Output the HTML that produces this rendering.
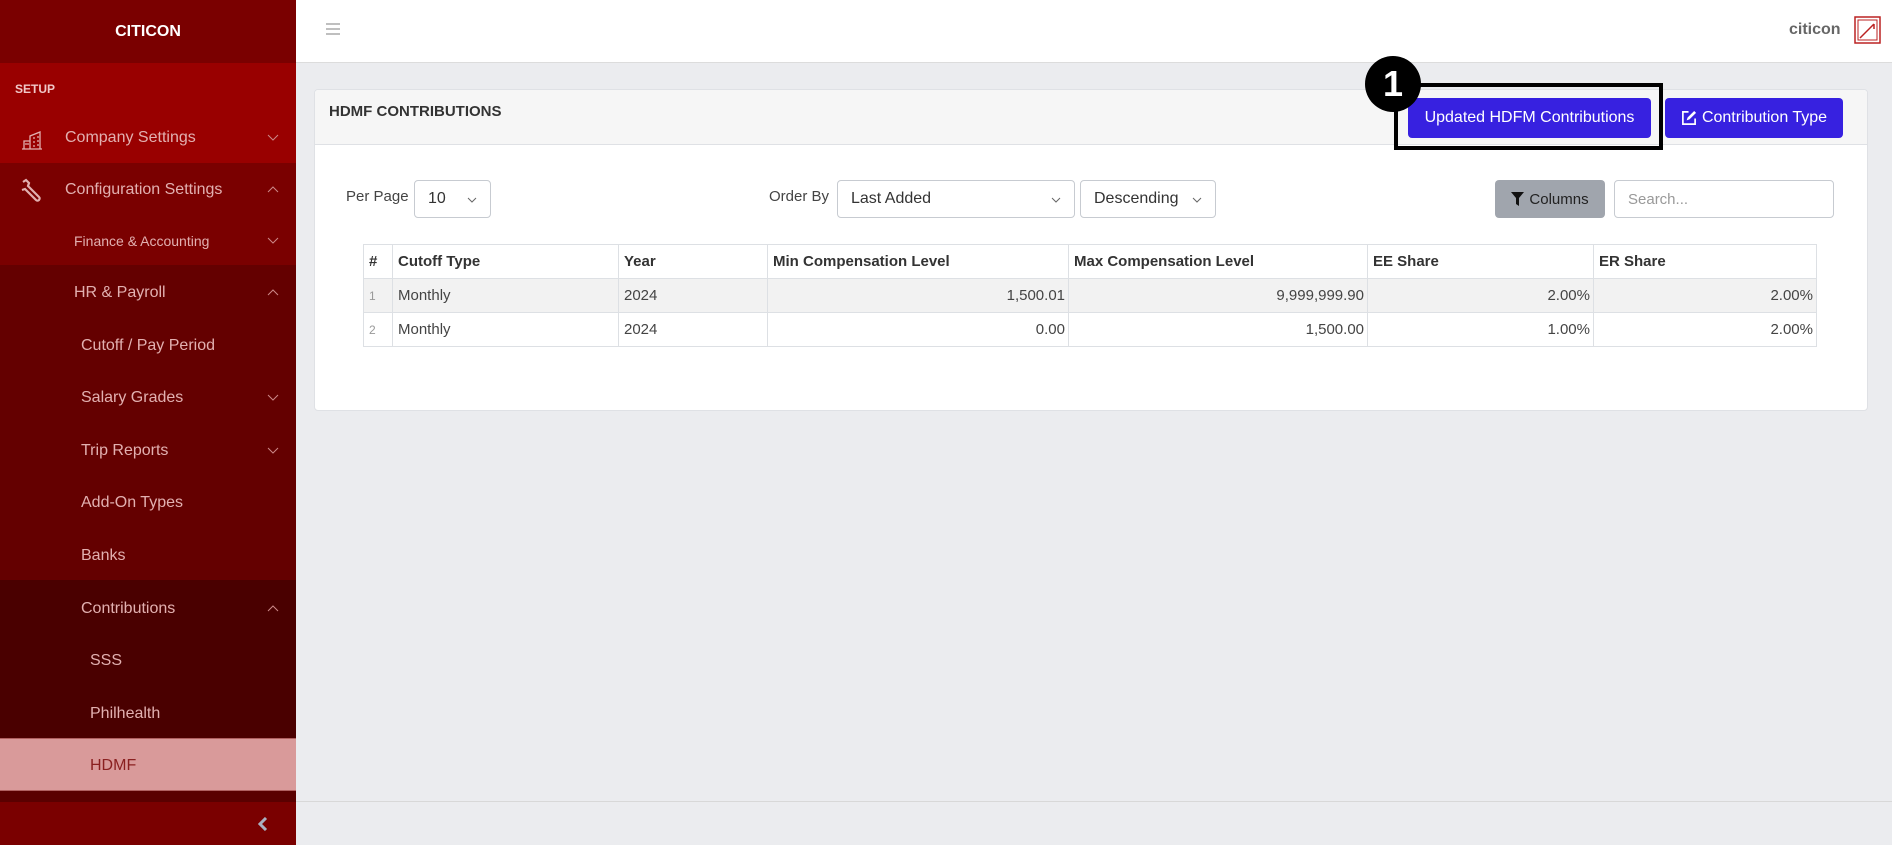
<!DOCTYPE html>
<html><head><meta charset="utf-8"><style>
*{box-sizing:border-box;margin:0;padding:0}
body{width:1892px;height:845px;position:relative;overflow:hidden;background:#ebecef;font-family:"Liberation Sans",sans-serif;color:#333}
.a{position:absolute}
.sb{left:0;top:0;width:296px;height:845px;background:#7a0000}
.row{position:absolute;left:0;width:296px;color:#e2b0b0;font-size:16px;display:flex;align-items:center}
.chev{position:absolute;right:17px;top:50%;margin-top:-4px}
.hd{left:296px;top:0;width:1596px;height:63px;background:#fff;border-bottom:1px solid #dcdcdc}
.card{left:314px;top:89px;width:1554px;height:322px;background:#fff;border:1px solid #dfe1e5;border-radius:4px}
.btn{position:absolute;background:#3721e0;color:#fff;font-size:16px;border-radius:4px;display:flex;align-items:center;justify-content:center}
.sel{position:absolute;border:1px solid #c7cbd1;border-radius:4px;background:#fff;font-size:16px;color:#333;display:flex;align-items:center;padding-left:13px;height:38px;top:180px}
.sel svg{position:absolute;right:13px;top:16px}
table{position:absolute;left:363px;top:244px;width:1454px;border-collapse:collapse;font-size:15px;color:#444}
td,th{border:1px solid #dde0e4;padding:0 5px;height:34px;text-align:left}
th{font-weight:bold;color:#333}
td.r{text-align:right;padding-right:3px}
tr.g td{background:#f2f2f2}
td.n{color:#999;font-size:12px}
</style></head><body>
<div class="a sb"></div>
<div class="a" style="left:0;top:0;width:296px;height:63px;background:#7a0000;color:#fff;font-weight:bold;font-size:16px;text-align:center;line-height:63px">CITICON</div>
<div class="a" style="left:0;top:63px;width:296px;height:100px;background:#990000"></div>
<div class="a" style="left:15px;top:82px;color:#f0c8c8;font-size:12px;font-weight:bold">SETUP</div>
<div class="a" style="left:0;top:163px;width:296px;height:102px;background:#7a0000"></div>
<div class="a" style="left:0;top:265px;width:296px;height:315px;background:#640000"></div>
<div class="a" style="left:0;top:580px;width:296px;height:158px;background:#4a0000"></div>
<div class="a" style="left:0;top:738px;width:296px;height:53px;background:#d99a9a;border-top:1px solid #b06060;border-bottom:1px solid #b06060"></div>
<div class="a" style="left:0;top:791px;width:296px;height:11px;background:#5a0000"></div>
<div class="a" style="left:0;top:802px;width:296px;height:43px;background:#7a0000"></div>
<svg class="a" style="left:258px;top:817px" width="10" height="14" viewBox="0 0 10 14"><path d="M8 1L2 7l6 6" stroke="#a9b0c0" stroke-width="3" fill="none"/></svg>

<div class="row" style="top:122px;height:32px;padding-left:65px"><svg class="a" style="left:21px;top:8px" width="22" height="20" viewBox="0 0 22 20"><path d="M1 19h20M3 19V11h6v8M9 19V6l10-4v17M12 8h2M16 7h2M12 12h2M16 11h2M12 16h2M16 15h2M4 14h4" stroke="#e2b0b0" stroke-width="1.3" fill="none"/></svg>Company Settings<svg class="chev" width="12" height="7" viewBox="0 0 12 7"><path d="M1 1l5 5 5-5" stroke="#c88" fill="none"/></svg></div>
<div class="row" style="top:174px;height:32px;padding-left:65px"><svg class="a" style="left:20px;top:4px" width="24" height="24" viewBox="0 0 24 24"><path d="M3 4l3-2 3 3-1 3 11 11a2 2 0 1 1-3 3L5 11 2 12" stroke="#e2b0b0" stroke-width="2.2" fill="none"/></svg>Configuration Settings<svg class="chev" width="12" height="7" viewBox="0 0 12 7"><path d="M1 6l5-5 5 5" stroke="#c88" fill="none"/></svg></div>
<div class="row" style="top:226px;height:30px;padding-left:74px;font-size:14px">Finance &amp; Accounting<svg class="chev" width="12" height="7" viewBox="0 0 12 7"><path d="M1 1l5 5 5-5" stroke="#c88" fill="none"/></svg></div>
<div class="row" style="top:278px;height:30px;padding-left:74px">HR &amp; Payroll<svg class="chev" width="12" height="7" viewBox="0 0 12 7"><path d="M1 6l5-5 5 5" stroke="#c88" fill="none"/></svg></div>
<div class="row" style="top:331px;height:30px;padding-left:81px">Cutoff / Pay Period</div>
<div class="row" style="top:383px;height:30px;padding-left:81px">Salary Grades<svg class="chev" width="12" height="7" viewBox="0 0 12 7"><path d="M1 1l5 5 5-5" stroke="#c88" fill="none"/></svg></div>
<div class="row" style="top:436px;height:30px;padding-left:81px">Trip Reports<svg class="chev" width="12" height="7" viewBox="0 0 12 7"><path d="M1 1l5 5 5-5" stroke="#c88" fill="none"/></svg></div>
<div class="row" style="top:488px;height:30px;padding-left:81px">Add-On Types</div>
<div class="row" style="top:541px;height:30px;padding-left:81px">Banks</div>
<div class="row" style="top:594px;height:30px;padding-left:81px">Contributions<svg class="chev" width="12" height="7" viewBox="0 0 12 7"><path d="M1 6l5-5 5 5" stroke="#c88" fill="none"/></svg></div>
<div class="row" style="top:646px;height:30px;padding-left:90px">SSS</div>
<div class="row" style="top:699px;height:30px;padding-left:90px">Philhealth</div>
<div class="row" style="top:751px;height:30px;padding-left:90px;color:#8a2020">HDMF</div>

<div class="a hd"></div>
<svg class="a" style="left:326px;top:23px" width="14" height="12" viewBox="0 0 14 12"><path d="M0 1h14M0 6h14M0 11h14" stroke="#999" stroke-width="1.2"/></svg>
<div class="a" style="left:1789px;top:21px;color:#666;font-weight:bold;font-size:16px">citicon</div>
<svg class="a" style="left:1854px;top:16px" width="27" height="28" viewBox="0 0 27 28"><rect x="1" y="1" width="25" height="26" fill="none" stroke="#b22" stroke-width="1.5"/><rect x="4" y="4" width="19" height="20" fill="none" stroke="#b22" stroke-width="1"/><path d="M6 22L20 8M20 8v5" stroke="#b22" stroke-width="1.5" fill="none"/></svg>
<div class="a" style="left:296px;top:801px;width:1596px;height:1px;background:#d8d8d8"></div>

<div class="a card"></div>
<div class="a" style="left:315px;top:90px;width:1552px;height:55px;background:#f6f6f6;border-bottom:1px solid #dfe1e5;border-radius:4px 4px 0 0"></div>
<div class="a" style="left:329px;top:103px;font-weight:bold;font-size:15px;color:#333">HDMF CONTRIBUTIONS</div>
<div class="btn" style="left:1408px;top:98px;width:243px;height:40px">Updated HDFM Contributions</div>
<div class="btn" style="left:1665px;top:98px;width:178px;height:40px"><svg width="16" height="16" viewBox="0 0 17 17" style="margin-right:5px"><path d="M8 2H2v13h13V9" stroke="#fff" stroke-width="1.8" fill="none"/><path d="M6 11l1-3 7-7 2 2-7 7z" fill="#fff"/></svg>Contribution Type</div>
<div class="a" style="left:1394px;top:83px;width:269px;height:67px;border:4px solid #000"></div>
<div class="a" style="left:1365px;top:56px;width:56px;height:56px;border-radius:50%;background:#000;color:#fff;font-weight:bold;font-size:36px;text-align:center;line-height:56px">1</div>

<div class="a" style="left:346px;top:188px;font-size:15px;color:#444">Per Page</div>
<div class="sel" style="left:414px;width:77px">10<svg width="10" height="6" viewBox="0 0 10 6"><path d="M1 1l4 4 4-4" stroke="#666" fill="none"/></svg></div>
<div class="a" style="left:769px;top:188px;font-size:15px;color:#444">Order By</div>
<div class="sel" style="left:837px;width:238px">Last Added<svg width="10" height="6" viewBox="0 0 10 6"><path d="M1 1l4 4 4-4" stroke="#666" fill="none"/></svg></div>
<div class="sel" style="left:1080px;width:136px">Descending<svg width="10" height="6" viewBox="0 0 10 6"><path d="M1 1l4 4 4-4" stroke="#666" fill="none"/></svg></div>
<div class="a" style="left:1495px;top:180px;width:110px;height:38px;background:#a0a5ad;border-radius:4px;color:#222;font-size:15px;display:flex;align-items:center;justify-content:center"><svg width="13" height="14" viewBox="0 0 13 14" style="margin-right:5px"><path d="M0 0h13L8 6v8L5 12V6z" fill="#111"/></svg>Columns</div>
<div class="sel" style="left:1614px;width:220px;color:#999;font-size:15px">Search...</div>

<table>
<tr><th style="width:29px">#</th><th style="width:226px">Cutoff Type</th><th style="width:149px">Year</th><th style="width:301px">Min Compensation Level</th><th style="width:299px">Max Compensation Level</th><th style="width:226px">EE Share</th><th>ER Share</th></tr>
<tr class="g"><td class="n">1</td><td>Monthly</td><td>2024</td><td class="r">1,500.01</td><td class="r">9,999,999.90</td><td class="r">2.00%</td><td class="r">2.00%</td></tr>
<tr><td class="n">2</td><td>Monthly</td><td>2024</td><td class="r">0.00</td><td class="r">1,500.00</td><td class="r">1.00%</td><td class="r">2.00%</td></tr>
</table>
</body></html>
